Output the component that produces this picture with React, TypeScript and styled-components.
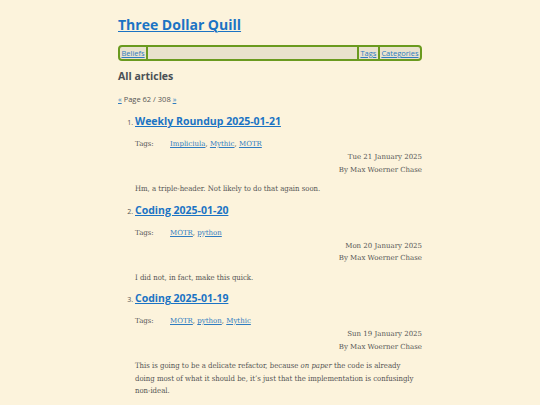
import React from "react";
import styled, { createGlobalStyle } from "styled-components";

type Article = {
  title: string;
  tags: string[];
  date: string;
  summary: React.ReactNode;
};

const articles: Article[] = [
  {
    title: "Weekly Roundup 2025-01-21",
    tags: ["Impliciula", "Mythic", "MOTR"],
    date: "Tue 21 January 2025",
    summary: "Hm, a triple-header. Not likely to do that again soon.",
  },
  {
    title: "Coding 2025-01-20",
    tags: ["MOTR", "python"],
    date: "Mon 20 January 2025",
    summary: "I did not, in fact, make this quick.",
  },
  {
    title: "Coding 2025-01-19",
    tags: ["MOTR", "python", "Mythic"],
    date: "Sun 19 January 2025",
    summary: (
      <>
        This is going to be a delicate refactor, because <em>on paper</em> the
        code is already doing most of what it should be, it’s just that the
        implementation is confusingly non-ideal.
      </>
    ),
  },
];

const GlobalStyle = createGlobalStyle`
  html, body {
    margin: 0;
    padding: 0;
    background: #fcf3dc;
  }
  body {
    font-family: "DejaVu Serif", serif;
    color: #555555;
  }
`;

export default function App() {
  return (
    <>
      <GlobalStyle />
      <Page>
        <SiteTitle href="#">Three Dollar Quill</SiteTitle>
        <Nav>
          <NavLink href="#">Beliefs</NavLink>
          <NavSpacer />
          <NavLink href="#">Tags</NavLink>
          <NavLink href="#">Categories</NavLink>
        </Nav>
        <Heading>All articles</Heading>
        <Pager>
          <SmallLink href="#">«</SmallLink> Page 62 / 308{" "}
          <SmallLink href="#">»</SmallLink>
        </Pager>
        <ArticleList>
          {articles.map((a) => (
            <ArticleItem key={a.title}>
              <ArticleTitle href="#">{a.title}</ArticleTitle>
              <TagRow>
                <TagLabel>Tags:</TagLabel>
                <span>
                  {a.tags.map((t, i) => (
                    <React.Fragment key={t}>
                      <SmallLink href="#">{t}</SmallLink>
                      {i < a.tags.length - 1 ? ", " : ""}
                    </React.Fragment>
                  ))}
                </span>
              </TagRow>
              <Meta>
                <div>{a.date}</div>
                <div>By Max Woerner Chase</div>
              </Meta>
              <Summary>{a.summary}</Summary>
            </ArticleItem>
          ))}
        </ArticleList>
      </Page>
    </>
  );
}

const Page = styled.div`
  width: 304px;
  margin: 0 auto;
  padding-top: 15px;
`;

const SiteTitle = styled.a`
  display: block;
  font-family: "Open Sans", sans-serif;
  font-weight: 700;
  font-size: 14px;
  line-height: 20px;
  color: #1b73c4;
  text-decoration: underline;
  text-decoration-thickness: 1px;
`;

const Nav = styled.nav`
  display: flex;
  align-items: stretch;
  margin-top: 10px;
  height: 12px;
  border: 2px solid #6a9a1f;
  border-radius: 4px;
  background: #e9e2cd;
  font-family: "Open Sans", sans-serif;
  font-size: 7.5px;
  line-height: 12px;
`;

const NavLink = styled.a`
  padding: 0 1.5px;
  color: #2f7cc0;
  border-left: 2px solid #6a9a1f;

  &:first-child {
    border-left: none;
  }
`;

const NavSpacer = styled.div`
  flex: 1;
  border-left: 2px solid #6a9a1f;
`;

const Heading = styled.h2`
  margin: 8px 0 0;
  font-family: "Open Sans", sans-serif;
  font-weight: 700;
  font-size: 10.5px;
  line-height: 14px;
  color: #4a5055;
`;

const Pager = styled.div`
  margin-top: 11px;
  font-family: "Open Sans", sans-serif;
  font-size: 7.5px;
  line-height: 10px;
`;

const SmallLink = styled.a`
  color: #2f7cc0;
`;

const ArticleList = styled.ol`
  margin: 9px 0 0;
  padding-left: 17px;
  font-family: "Open Sans", sans-serif;
  font-size: 7px;
`;

const ArticleItem = styled.li`
  margin-bottom: 6px;
  &::marker {
    color: #555555;
  }
`;

const ArticleTitle = styled.a`
  display: inline-block;
  font-family: "Open Sans", sans-serif;
  font-weight: 700;
  font-size: 10.5px;
  line-height: 16px;
  color: #1b73c4;
`;

const TagRow = styled.div`
  display: flex;
  margin-top: 9px;
  font-family: "DejaVu Serif", serif;
  font-size: 7px;
  line-height: 12px;
`;

const TagLabel = styled.span`
  width: 35px;
`;

const Meta = styled.div`
  margin-top: 1px;
  text-align: right;
  font-family: "DejaVu Serif", serif;
  font-size: 7px;
  line-height: 12.5px;
`;

const Summary = styled.p`
  margin: 7px 0 0;
  font-family: "DejaVu Serif Condensed", "DejaVu Serif", serif;
  font-stretch: semi-condensed;
  font-size: 7.7px;
  line-height: 12.5px;
`;
